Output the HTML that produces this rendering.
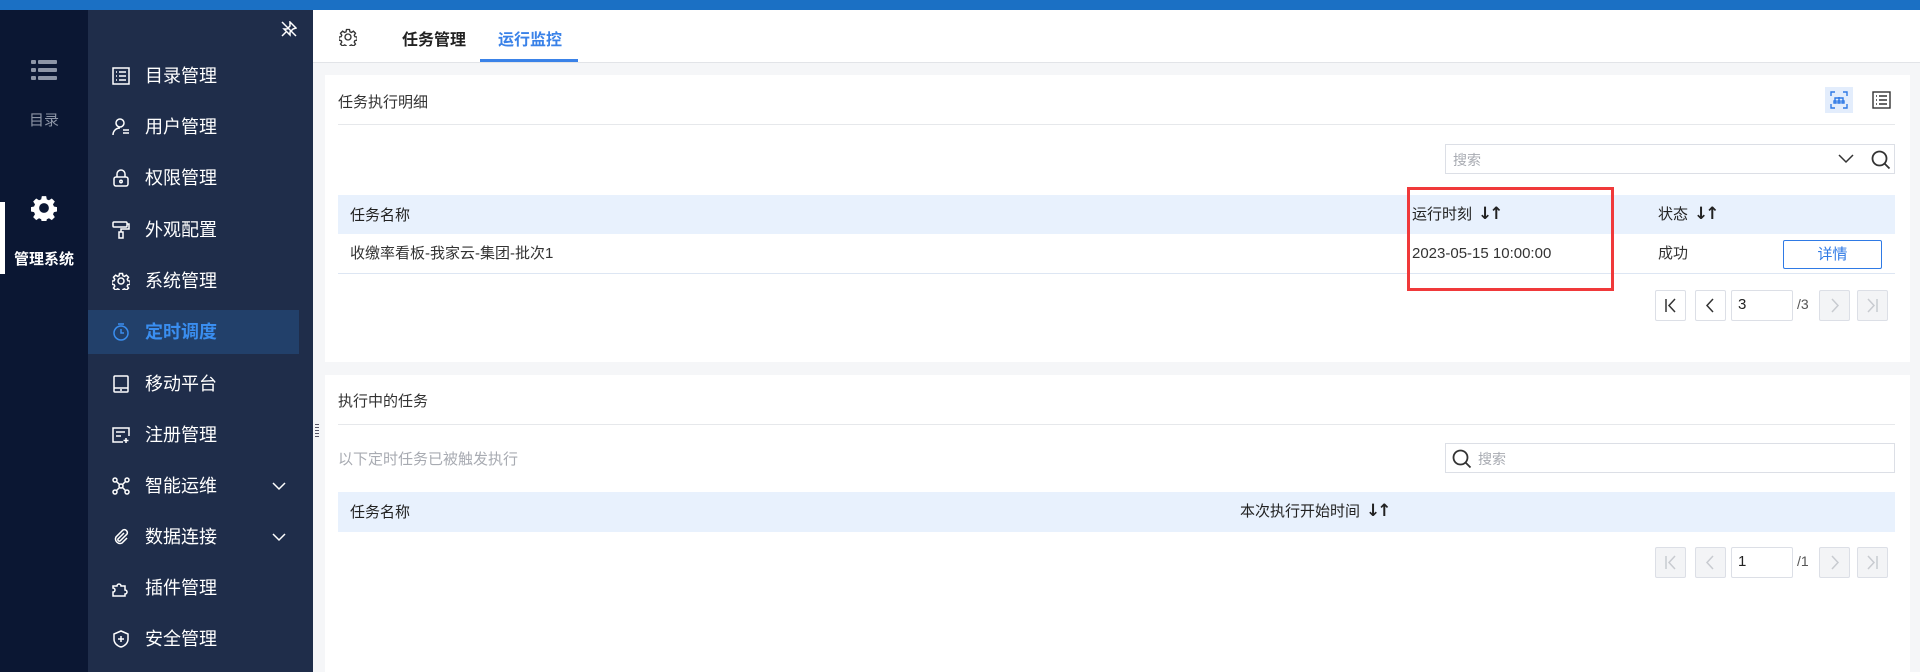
<!DOCTYPE html>
<html><head><meta charset="utf-8"><style>
*{box-sizing:border-box;margin:0;padding:0}
body{width:1920px;height:672px;overflow:hidden;background:#f5f6f8;font-family:"Liberation Sans","Noto Sans CJK SC",sans-serif;position:relative;color:#222}
.a{position:absolute}
.top{left:0;top:0;width:1920px;height:10px;background:#1b70c4}
.lc{left:0;top:10px;width:88px;height:662px;background:#0b1733}
.sb{left:88px;top:10px;width:225px;height:662px;background:#1f2d4a}
.mi{position:absolute;left:0;width:211px;height:44px;color:#fff;font-size:18px;line-height:44px}
.mi .t{position:absolute;left:57px;top:0}
.mi svg{position:absolute;left:24px;top:13px}
.mi .ch{position:absolute;left:183px;top:14px}
.act{background:#22406a;color:#3a8ef0;font-weight:bold}
.tabs{left:313px;top:10px;width:1607px;height:53px;background:#fff;border-bottom:1px solid #e2e4e8}
.panel{background:#fff;left:325px;width:1585px}
.t15{font-size:15px;color:#333}
.hr{height:1px;background:#e6e8eb}
.th{background:#e8f1fd;font-size:15px;color:#222}
.ar{margin-left:6px;font-size:17px;font-weight:bold;font-family:"DejaVu Sans",sans-serif;letter-spacing:-3px}
.row span{line-height:40px;top:0!important}
.pg{position:absolute;width:31px;height:31px;border:1px solid #dcdfe6;background:#fff;border-radius:2px}
.pg.d{background:#f3f4f6}
</style></head><body>
<div class="a top"></div>
<div class="a lc">
  <svg class="a" style="left:31px;top:50px" width="26" height="20" viewBox="0 0 26 20"><g fill="#8d95a6"><rect x="0" y="0" width="5" height="4" rx="1"/><rect x="7" y="0" width="19" height="4" rx="1"/><rect x="0" y="8" width="5" height="4" rx="1"/><rect x="7" y="8" width="19" height="4" rx="1"/><rect x="0" y="16" width="5" height="4" rx="1"/><rect x="7" y="16" width="19" height="4" rx="1"/></g></svg>
  <div class="a" style="left:0;width:88px;top:99px;text-align:center;color:#8d95a6;font-size:15px">目录</div>
  <div class="a" style="left:0;top:192px;width:5px;height:72px;background:#fff"></div>
  <svg class="a" style="left:31px;top:185px" width="26" height="26" viewBox="0 0 24 24"><path fill="#fff" d="M10 1h4l.6 3 2 .9 2.6-1.7 2.8 2.8-1.7 2.6.9 2 3 .6v4l-3 .6-.9 2 1.7 2.6-2.8 2.8-2.6-1.7-2 .9-.6 3h-4l-.6-3-2-.9-2.6 1.7-2.8-2.8 1.7-2.6-.9-2-3-.6v-4l3-.6.9-2-1.7-2.6 2.8-2.8 2.6 1.7 2-.9z"/><circle cx="12" cy="12" r="4.5" fill="#0b1733"/></svg>
  <div class="a" style="left:0;width:88px;top:238px;text-align:center;color:#fff;font-size:15px;font-weight:bold">管理系统</div>
</div>
<div class="a sb">
  <svg class="a" style="left:193px;top:11px" width="16" height="16" viewBox="0 0 16 16" fill="none" stroke="#fff" stroke-width="1.5"><path d="M9 1l6 6-3 1-3 3 0 3-6-6 3 0 3-3z"/><path d="M1 15l4-4M1 1l14 14"/></svg>
  <div class="mi" style="top:44px"><svg width="18" height="18" viewBox="0 0 18 18" fill="none" stroke="#fff" stroke-width="1.5"><rect x="1" y="1" width="16" height="16"/><path d="M4 5h1M7 5h7M4 9h1M7 9h7M4 13h1M7 13h7"/></svg><span class="t">目录管理</span></div>
  <div class="mi" style="top:95px"><svg width="18" height="18" viewBox="0 0 18 18" fill="none" stroke="#fff" stroke-width="1.5"><circle cx="8" cy="5" r="4"/><path d="M1 17c0-4 3-7 7-7M11 12h6M11 15h6"/></svg><span class="t">用户管理</span></div>
  <div class="mi" style="top:146px"><svg width="18" height="18" viewBox="0 0 18 18" fill="none" stroke="#fff" stroke-width="1.5"><rect x="2" y="8" width="14" height="9" rx="2"/><path d="M5 8V5a4 4 0 018 0v3"/><circle cx="9" cy="12.5" r="1.2"/></svg><span class="t">权限管理</span></div>
  <div class="mi" style="top:198px"><svg width="18" height="18" viewBox="0 0 18 18" fill="none" stroke="#fff" stroke-width="1.5"><rect x="1" y="1" width="14" height="5" rx="1"/><path d="M15 3h2v5H9v3"/><rect x="7" y="11" width="4" height="6"/></svg><span class="t">外观配置</span></div>
  <div class="mi" style="top:249px"><svg width="18" height="18" viewBox="0 0 24 24" fill="none" stroke="#fff" stroke-width="2"><path d="M10 2h4l.6 3 2 .9 2.6-1.7 2.8 2.8-1.7 2.6.9 2 3 .6v4l-3 .6-.9 2 1.7 2.6-2.8 2.8-2.6-1.7-2 .9-.6 3h-4l-.6-3-2-.9-2.6 1.7-2.8-2.8 1.7-2.6-.9-2-3-.6v-4l3-.6.9-2-1.7-2.6 2.8-2.8 2.6 1.7 2-.9z"/><circle cx="12" cy="12" r="4"/></svg><span class="t">系统管理</span></div>
  <div class="mi act" style="top:300px"><svg width="18" height="18" viewBox="0 0 18 18" fill="none" stroke="#3a8ef0" stroke-width="1.5"><circle cx="9" cy="10" r="7"/><path d="M6 1h6M9 6v4h3"/></svg><span class="t">定时调度</span></div>
  <div class="mi" style="top:352px"><svg width="18" height="18" viewBox="0 0 18 18" fill="none" stroke="#fff" stroke-width="1.5"><rect x="2" y="1" width="14" height="16" rx="1"/><path d="M2 13h14M8 15h2"/></svg><span class="t">移动平台</span></div>
  <div class="mi" style="top:403px"><svg width="18" height="18" viewBox="0 0 18 18" fill="none" stroke="#fff" stroke-width="1.5"><path d="M11 16H1V2h16v8M4 6h9M4 10h5M14 12v5M11.5 14.5h5"/></svg><span class="t">注册管理</span></div>
  <div class="mi" style="top:454px"><svg width="18" height="18" viewBox="0 0 18 18" fill="none" stroke="#fff" stroke-width="1.5"><circle cx="3" cy="3" r="2"/><circle cx="15" cy="3" r="2"/><circle cx="3" cy="15" r="2"/><circle cx="15" cy="15" r="2"/><circle cx="9" cy="9" r="2"/><path d="M4.5 4.5l3 3M13.5 4.5l-3 3M4.5 13.5l3-3M13.5 13.5l-3-3"/></svg><span class="t">智能运维</span><svg class="ch" width="16" height="16" viewBox="0 0 16 16" fill="none" stroke="#fff" stroke-width="1.5"><path d="M2 5l6 6 6-6"/></svg></div>
  <div class="mi" style="top:505px"><svg width="18" height="18" viewBox="0 0 18 18" fill="none" stroke="#fff" stroke-width="1.5"><path d="M12 5l-6 6a1.5 1.5 0 002 2l7-7a3 3 0 00-4-4l-7 7a4.5 4.5 0 006 6l5-5"/></svg><span class="t">数据连接</span><svg class="ch" width="16" height="16" viewBox="0 0 16 16" fill="none" stroke="#fff" stroke-width="1.5"><path d="M2 5l6 6 6-6"/></svg></div>
  <div class="mi" style="top:556px"><svg width="18" height="18" viewBox="0 0 18 18" fill="none" stroke="#fff" stroke-width="1.5"><path d="M1 7h4a2 2 0 114 0h4v4a2 2 0 110 4v2H1v-4a2 2 0 100-4z"/></svg><span class="t">插件管理</span></div>
  <div class="mi" style="top:607px"><svg width="18" height="18" viewBox="0 0 18 18" fill="none" stroke="#fff" stroke-width="1.5"><path d="M9 1l7 3v5c0 4-3 7-7 8-4-1-7-4-7-8V4z"/><path d="M9 6v6M6 9h6"/></svg><span class="t">安全管理</span></div>
</div>
<div class="a" style="left:315px;top:424px;width:4px;height:14px;background:repeating-linear-gradient(#556 0 1px,transparent 1px 3px)"></div>

<div class="a tabs">
  <svg class="a" style="left:26px;top:18px" width="18" height="18" viewBox="0 0 24 24" fill="none" stroke="#333" stroke-width="1.8"><path d="M10 2h4l.6 3 2 .9 2.6-1.7 2.8 2.8-1.7 2.6.9 2 3 .6v4l-3 .6-.9 2 1.7 2.6-2.8 2.8-2.6-1.7-2 .9-.6 3h-4l-.6-3-2-.9-2.6 1.7-2.8-2.8 1.7-2.6-.9-2-3-.6v-4l3-.6.9-2-1.7-2.6 2.8-2.8 2.6 1.7 2-.9z"/><circle cx="12" cy="12" r="4"/></svg>
  <div class="a" style="left:89px;top:16px;font-size:16px;font-weight:bold;color:#222">任务管理</div>
  <div class="a" style="left:185px;top:16px;font-size:16px;font-weight:bold;color:#3a82e8">运行监控</div>
  <div class="a" style="left:167px;top:49px;width:98px;height:3px;background:#3a82e8"></div>
</div>

<div class="a panel" style="top:75px;height:287px">
  <div class="a t15" style="left:13px;top:16px">任务执行明细</div>
  <div class="a" style="left:1500px;top:12px;width:28px;height:26px;background:#e3edfc"></div>
  <svg class="a" style="left:1505px;top:16px" width="18" height="18" viewBox="0 0 18 18" fill="none" stroke="#2f7ae5" stroke-width="1.4"><path d="M1 5V1h4M13 1h4v4M17 13v4h-4M5 17H1v-4M5 10V7h8v3M9 6v4M4 10h2v2H4zM8 10h2v2H8zM12 10h2v2h-2z"/></svg>
  <svg class="a" style="left:1547px;top:16px" width="19" height="18" viewBox="0 0 19 18" fill="none" stroke="#333" stroke-width="1.4"><rect x="1" y="1" width="17" height="16"/><path d="M4 5h1M7 5h8M4 9h1M7 9h8M4 13h1M7 13h8"/></svg>
  <div class="a hr" style="left:13px;top:49px;width:1557px"></div>
  <div class="a" style="left:1120px;top:69px;width:450px;height:30px;border:1px solid #dcdfe6"><span class="a" style="left:7px;top:5px;font-size:14px;color:#a8abb2">搜索</span>
    <svg class="a" style="left:392px;top:8px" width="16" height="12" viewBox="0 0 16 12" fill="none" stroke="#333" stroke-width="1.5"><path d="M1 2l7 7 7-7"/></svg>
    <svg class="a" style="left:425px;top:5px" width="20" height="20" viewBox="0 0 20 20" fill="none" stroke="#333" stroke-width="1.8"><circle cx="8.5" cy="8.5" r="7"/><path d="M13.5 13.5l5 5"/></svg></div>
  <div class="a th" style="left:13px;top:120px;width:1557px;height:39px">
    <span class="a" style="left:12px;top:9px">任务名称</span>
    <span class="a" style="left:1074px;top:8px">运行时刻<b class="ar">↓↑</b></span>
    <span class="a" style="left:1320px;top:8px">状态<b class="ar">↓↑</b></span>
  </div>
  <div class="a row" style="left:13px;top:159px;width:1557px;height:40px;border-bottom:1px solid #dde6f3;font-size:15px;color:#333">
    <span class="a" style="left:12px">收缴率看板-我家云-集团-批次1</span>
    <span class="a" style="left:1074px">2023-05-15 10:00:00</span>
    <span class="a" style="left:1320px">成功</span>
    <div class="a" style="left:1445px;top:6px;width:99px;height:29px;border:1px solid #2f7ae5;border-radius:2px;color:#2f7ae5;text-align:center;line-height:27px">详情</div>
  </div>
  <div class="a" style="left:1082px;top:112px;width:207px;height:104px;border:3px solid #f0393a"></div>
  <div class="pg" style="left:1330px;top:215px"><svg width="29" height="29" viewBox="0 0 29 29" fill="none" stroke="#333" stroke-width="1.5"><path d="M10 8v13M19 8l-6 6.5 6 6.5"/></svg></div>
  <div class="pg" style="left:1370px;top:215px"><svg width="29" height="29" viewBox="0 0 29 29" fill="none" stroke="#333" stroke-width="1.5"><path d="M17 8l-6 6.5 6 6.5"/></svg></div>
  <div class="pg" style="left:1406px;top:215px;width:62px;font-size:15px;padding:5px 0 0 6px">3</div>
  <span class="a" style="left:1472px;top:221px;font-size:14px;color:#555">/3</span>
  <div class="pg d" style="left:1494px;top:215px"><svg width="29" height="29" viewBox="0 0 29 29" fill="none" stroke="#c8cbd0" stroke-width="1.5"><path d="M12 8l6 6.5-6 6.5"/></svg></div>
  <div class="pg d" style="left:1532px;top:215px"><svg width="29" height="29" viewBox="0 0 29 29" fill="none" stroke="#c8cbd0" stroke-width="1.5"><path d="M19 8v13M10 8l6 6.5-6 6.5"/></svg></div>
</div>

<div class="a panel" style="top:375px;height:297px">
  <div class="a t15" style="left:13px;top:15px">执行中的任务</div>
  <div class="a hr" style="left:13px;top:49px;width:1557px"></div>
  <div class="a" style="left:13px;top:73px;font-size:15px;color:#a8abb2">以下定时任务已被触发执行</div>
  <div class="a" style="left:1120px;top:68px;width:450px;height:30px;border:1px solid #dcdfe6">
    <svg class="a" style="left:6px;top:5px" width="20" height="20" viewBox="0 0 20 20" fill="none" stroke="#333" stroke-width="1.8"><circle cx="8.5" cy="8.5" r="7"/><path d="M13.5 13.5l5 5"/></svg>
    <span class="a" style="left:32px;top:5px;font-size:14px;color:#a8abb2">搜索</span></div>
  <div class="a th" style="left:13px;top:117px;width:1557px;height:40px">
    <span class="a" style="left:12px;top:9px">任务名称</span>
    <span class="a" style="left:902px;top:8px">本次执行开始时间<b class="ar">↓↑</b></span>
  </div>
  <div class="pg d" style="left:1330px;top:172px"><svg width="29" height="29" viewBox="0 0 29 29" fill="none" stroke="#c8cbd0" stroke-width="1.5"><path d="M10 8v13M19 8l-6 6.5 6 6.5"/></svg></div>
  <div class="pg d" style="left:1370px;top:172px"><svg width="29" height="29" viewBox="0 0 29 29" fill="none" stroke="#c8cbd0" stroke-width="1.5"><path d="M17 8l-6 6.5 6 6.5"/></svg></div>
  <div class="pg" style="left:1406px;top:172px;width:62px;font-size:15px;padding:5px 0 0 6px">1</div>
  <span class="a" style="left:1472px;top:178px;font-size:14px;color:#555">/1</span>
  <div class="pg d" style="left:1494px;top:172px"><svg width="29" height="29" viewBox="0 0 29 29" fill="none" stroke="#c8cbd0" stroke-width="1.5"><path d="M12 8l6 6.5-6 6.5"/></svg></div>
  <div class="pg d" style="left:1532px;top:172px"><svg width="29" height="29" viewBox="0 0 29 29" fill="none" stroke="#c8cbd0" stroke-width="1.5"><path d="M19 8v13M10 8l6 6.5-6 6.5"/></svg></div>
</div>
</body></html>
